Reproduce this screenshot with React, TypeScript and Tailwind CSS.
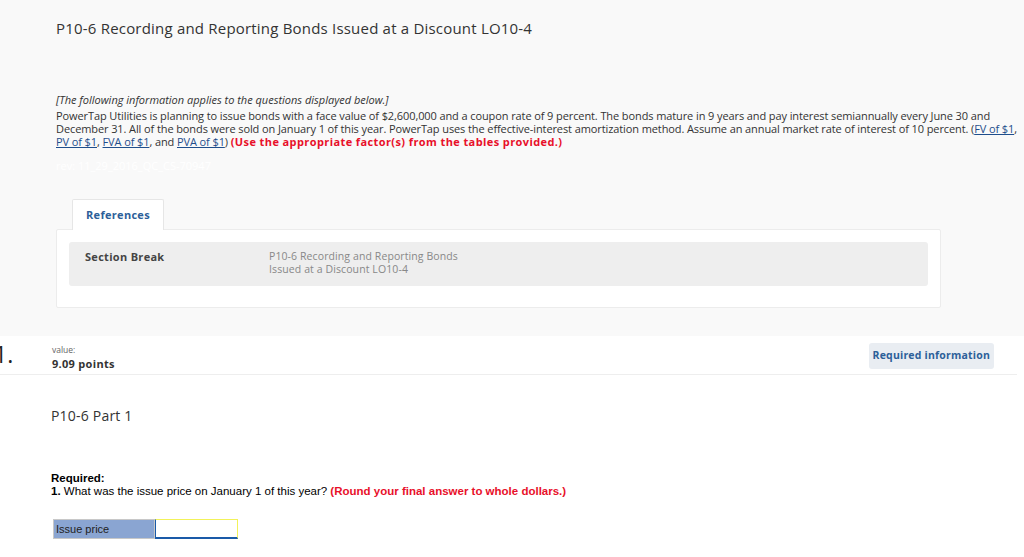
import React from 'react';

const sans = { fontFamily: '"Open Sans", "Liberation Sans", sans-serif' };

function Ref({ children }: { children: React.ReactNode }) {
  return <a className="text-[#1f4e8c] underline whitespace-nowrap">{children}</a>;
}

export default function App() {
  return (
    <div className="w-[1024px] h-[557px] overflow-hidden bg-white text-[#333]" style={sans}>
      {/* intro + references */}
      <div className="bg-[#f9f9f9] h-[336px] pl-[56px] pr-[3px] pt-[17px]">
        <h1 className="text-[15px] leading-[22px] tracking-[0.2px] text-[#333]">
          P10-6 Recording and Reporting Bonds Issued at a Discount LO10-4
        </h1>
        <p className="mt-[54px] text-[11px] leading-[13px] italic">
          [The following information applies to the questions displayed below.]
        </p>
        <p className="mt-[3px] text-[11px] leading-[13px] tracking-[-0.1px]">
          PowerTap Utilities is planning to issue bonds with a face value of $2,600,000 and a coupon rate of 9 percent. The bonds mature in 9 years and pay interest semiannually every June 30 and December 31. All of the bonds were sold on January 1 of this year. PowerTap uses the effective-interest amortization method. Assume an annual market rate of interest of 10 percent. (<Ref>FV of $1</Ref>, <Ref>PV of $1</Ref>, <Ref>FVA of $1</Ref>, and <Ref>PVA of $1</Ref>) <span className="text-[#e8102a] font-bold tracking-[0.4px]">(Use the appropriate factor(s) from the tables provided.)</span>
        </p>
        <p className="mt-[11px] text-[11px] leading-[13px] text-white">rev: 11_29_2016_QC_CS-70947</p>

        <div className="mt-[27px] w-[885px]">
          <div className="ml-[16px] w-[92px] h-[31px] bg-white border border-[#e6e6e6] border-b-0 rounded-t-[2px] flex items-center justify-center relative z-10 -mb-px">
            <span className="text-[11px] font-bold text-[#2d5f99] tracking-[0.3px]">References</span>
          </div>
          <div className="bg-white border border-[#ececec] rounded-[2px] px-[12px] pt-[12px] pb-[21px]">
            <div className="bg-[#eeeeee] rounded-[3px] h-[44px] flex items-start pt-[8px] pl-[16px]">
              <span className="w-[184px] text-[11px] font-bold text-[#444] tracking-[0.3px] leading-[13px]">Section Break</span>
              <span className="text-[10.5px] leading-[13px] text-[#888] tracking-[0.1px]">
                P10-6 Recording and Reporting Bonds<br />Issued at a Discount LO10-4
              </span>
            </div>
          </div>
        </div>
      </div>

      {/* question header */}
      <div className="flex items-start h-[39px] border-b border-[#eeeeee] w-[1017px]">
        <span className="-ml-[6px] w-[58px] pt-[5px] text-[23px] leading-[26px] text-[#222]">1.</span>
        <div className="pt-[9px]">
          <div className="text-[8.5px] leading-[10px] text-[#666]">value:</div>
          <div className="mt-[1px] text-[11px] leading-[16px] font-bold text-[#333] tracking-[0.3px]">9.09 points</div>
        </div>
        <div className="ml-auto mr-[23px] mt-[7px] h-[26px] px-[4px] bg-[#e9edf2] rounded-[3px] flex items-center">
          <span className="text-[10.5px] font-bold text-[#2d5f99] tracking-[0.2px]">Required information</span>
        </div>
      </div>

      {/* part */}
      <div className="pl-[51px]">
        <h2 className="mt-[32px] text-[14px] leading-[18px] text-[#333] tracking-[0.2px]">P10-6 Part 1</h2>
        <div className="mt-[47px] text-[11.5px] leading-[13px] text-black" style={{ fontFamily: '"Liberation Sans", Arial, sans-serif' }}>
          <div className="font-bold">Required:</div>
          <div>
            <span className="font-bold">1.</span> What was the issue price on January 1 of this year?{' '}
            <span className="font-bold text-[#e8102a]">(Round your final answer to whole dollars.)</span>
          </div>
        </div>
        <div className="mt-[21px] ml-[2px] flex h-[20px]" style={{ fontFamily: '"Liberation Sans", Arial, sans-serif' }}>
          <div className="w-[102px] bg-[#8aa5d2] border border-[#c8c8c8] flex items-center pl-[2px] text-[11px] text-[#222]">Issue price</div>
          <div className="w-[83px] bg-white border border-[#f2f25a] border-l-[#1a5aa8] border-b-[#1a5aa8] border-b-2"></div>
        </div>
      </div>
    </div>
  );
}
